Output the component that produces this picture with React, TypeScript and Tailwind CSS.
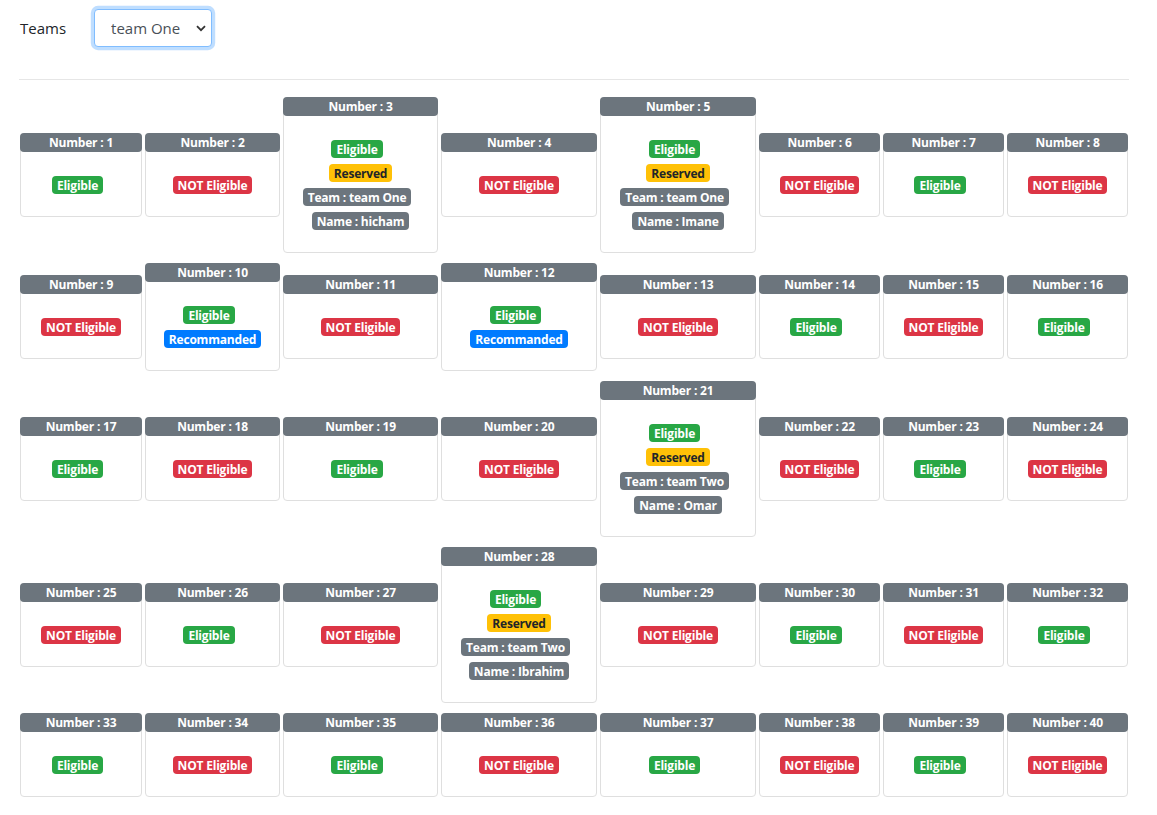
import { useState } from "react";

type Seat = {
  num: number;
  eligible: boolean;
  reserved?: { team: string; name: string };
  recommended?: boolean;
};

const reservations: Record<number, { team: string; name: string }> = {
  3: { team: "team One", name: "hicham" },
  5: { team: "team One", name: "Imane" },
  21: { team: "team Two", name: "Omar" },
  28: { team: "team Two", name: "Ibrahim" },
};

const eligibleSet = new Set([
  1, 3, 5, 7, 10, 12, 14, 16, 17, 19, 21, 23, 26, 28, 30, 32, 33, 35, 37, 39,
]);

const seats: Seat[] = Array.from({ length: 40 }).map((_, i) => {
  const num = i + 1;
  return {
    num,
    eligible: eligibleSet.has(num),
    reserved: reservations[num],
    recommended: num === 10 || num === 12,
  };
});

const badge =
  "inline-block rounded-[4px] px-[5px] pt-[3.5px] pb-[2.5px] text-[12px] font-bold leading-none tracking-[-0.2px] whitespace-nowrap";

function SeatCard({ seat }: { seat: Seat }) {
  return (
    <div className="flex flex-col rounded-[4px] border border-[#dfdfdf] bg-white">
      <div className="-mx-px -mt-px h-[19px] rounded-[4px] bg-[#6c757d] pt-px text-center text-[12px] font-bold leading-[18px] tracking-[-0.2px] text-white">
        Number : {seat.num}
      </div>
      <div className="flex flex-col items-center gap-[6px] pt-[24px] pb-[22px]">
        {seat.eligible ? (
          <span className={`${badge} mr-[7px] bg-[#28a745] text-white`}>Eligible</span>
        ) : (
          <span className={`${badge} bg-[#dc3545] text-white`}>NOT Eligible</span>
        )}
        {seat.recommended && (
          <span className={`${badge} bg-[#007bff] text-white`}>Recommanded</span>
        )}
        {seat.reserved && (
          <>
            <span className={`${badge} bg-[#ffc107] text-[#212529]`}>Reserved</span>
            <span className={`${badge} mr-[7px] bg-[#6c757d] text-white`}>
              Team : {seat.reserved.team}
            </span>
            <span className={`${badge} bg-[#6c757d] text-white`}>
              Name : {seat.reserved.name}
            </span>
          </>
        )}
      </div>
    </div>
  );
}

export default function App() {
  const [team, setTeam] = useState("team One");

  return (
    <div className="min-h-screen bg-white font-['Open_Sans',sans-serif] text-[#212529]">
      <div className="ml-[20px] w-[1108px] pt-[9px]">
        {/* team picker */}
        <div className="flex items-center gap-[28px]">
          <label className="text-[15px] leading-6">Teams</label>
          <div className="relative">
            <select
              value={team}
              onChange={(e) => setTeam(e.target.value)}
              className="h-[38px] w-[118px] appearance-none rounded-[4px] border border-[#80bdff] bg-white pl-[16px] pr-[20px] text-[15px] text-[#495057] shadow-[0_0_0_3.2px_rgba(0,123,255,0.25)] outline-none"
            >
              <option>team One</option>
              <option>team Two</option>
            </select>
            <svg
              className="pointer-events-none absolute right-[6px] top-[16px]"
              width="10"
              height="7"
              viewBox="0 0 10 7"
            >
              <path d="M1 1.2 L5 5.2 L9 1.2" fill="none" stroke="#333" strokeWidth="1.8" />
            </svg>
          </div>
        </div>

        <hr className="-mx-px mt-[32px] mb-[17px] border-0 border-t border-[#e6e6e6]" />

        {/* seats */}
        <div className="grid grid-cols-[122px_135px_155px_156px_156px_121px_121px_121px] items-center gap-x-[3px] gap-y-[10px]">
          {seats.map((s) => (
            <SeatCard key={s.num} seat={s} />
          ))}
        </div>
      </div>
    </div>
  );
}
